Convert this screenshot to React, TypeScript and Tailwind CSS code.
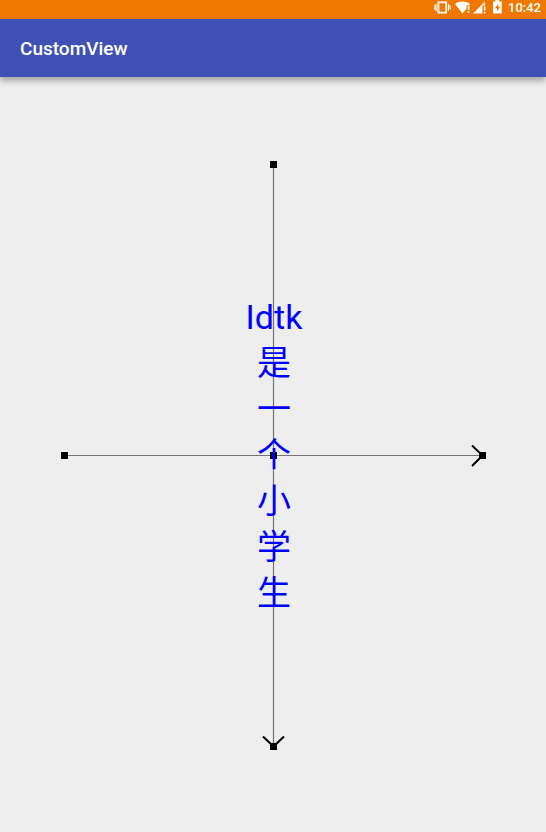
const LINES = ["Idtk", "是", "一", "个", "小", "学", "生"];

function StatusIcons() {
  return (
    <svg width="72" height="15" viewBox="0 0 72 15" fill="#fff" aria-hidden="true">
      {/* vibrate */}
      <path d="M3.500 1.500h9.500v12H3.500zM5.300 3.300v8.400h6V3.300z" fillRule="evenodd" />
      <path d="M1.500 4h1.200v7H1.500zM0 5.500h1.200v4H0zM13.800 4H15v7h-1.200zM15.500 5.500h1.200v4h-1.200z" />
      {/* wifi */}
      <path d="M21 4C25 .8 32 .8 36 4L35 5.200H32.500v3.500L28.500 13.500z" />
      <path d="M33.800 5.500h1.600v4.500h-1.600zM33.800 11.300h1.600v1.700h-1.600z" />
      {/* signal */}
      <path d="M39 13.500L51 1.500V5.500h-2.700v8z" />
      <path d="M49.800 6.500h1.600v4h-1.600zM49.800 11.700h1.600v1.700h-1.600z" />
      {/* battery */}
      <path d="M59 1.500h2.300V0h4V1.500H67.700v12H59zM64.200 3.500L61 8.300h2V11.500L66.200 6.800h-2z" fillRule="evenodd" />
    </svg>
  );
}

function Axes() {
  return (
    <svg width="426" height="593" viewBox="-1 0 426 593" role="img" aria-label="Coordinate axes">
      <path d="M3.500 297.500H421M212.500 6.500V588" stroke="#747474" strokeWidth="1.200" fill="none" />
      <path d="M411 287.500L421.500 297.500L411 308M202 578.500L212.500 588.500L223 578.500" stroke="#000" strokeWidth="2" fill="none" />
      <path d="M0 294h7v7H0zM418 294h7v7h-7zM209 294h7v7h-7zM209 3h7v7h-7zM209 585h7v7h-7z" />
    </svg>
  );
}

export default function App() {
  return (
    <div className="flex min-h-screen flex-col bg-[#eeeeee] font-['Roboto','Noto_Sans_CJK_SC',sans-serif]">
      <div className="flex h-[19px] items-start justify-end gap-0.5 bg-[#f07800] pr-[5px] text-white">
        <StatusIcons />
        <span className="text-[13px] leading-4 font-medium">10:42</span>
      </div>
      <header className="flex h-[58px] items-center bg-[#3f51b5] px-5 pt-0.5 shadow-[0_4px_6px_rgba(0,0,0,0.3)]">
        <h1 className="text-[19px] font-medium text-white">CustomView</h1>
      </header>
      <main className="flex flex-1 items-center justify-center">
        <div className="relative">
          <Axes />
          <div className="absolute inset-0 flex flex-col items-center justify-center pl-0.5 text-[34px] leading-[46px] text-[#0000ff]">
            {LINES.map((line) => (
              <p key={line}>{line}</p>
            ))}
          </div>
        </div>
      </main>
    </div>
  );
}
